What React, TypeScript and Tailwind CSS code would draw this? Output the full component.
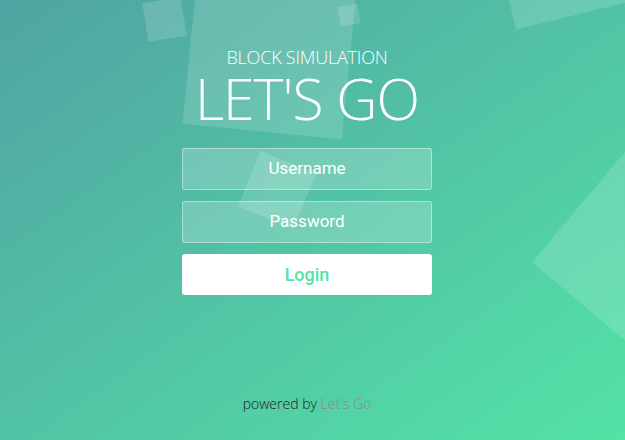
export default function App() {
    return (
        <div className="relative flex h-[440px] w-[625px] flex-col items-center overflow-hidden bg-gradient-to-br from-[#50a3a2] to-[#53e3a6] pr-[11px] font-['Open_Sans',sans-serif]">
            {/* floating squares */}
            <div className="absolute left-[145px] top-[0px] h-[39px] w-[39px] -rotate-[9deg] bg-white/15" />
            <div className="absolute left-[190px] top-[-28px] h-[160px] w-[160px] rotate-[5.7deg] bg-white/15" />
            <div className="absolute left-[339px] top-[5px] h-[20px] w-[20px] -rotate-[10deg] bg-white/15" />
            <div className="absolute left-[500px] top-[-103px] h-[120px] w-[120px] -rotate-[13.8deg] bg-white/15" />
            <div className="absolute left-[573px] top-[150px] h-[200px] w-[200px] rotate-[40deg] bg-white/15" />
            <div className="absolute left-[247px] top-[160px] h-[60px] w-[60px] rotate-[22deg] bg-white/15" />

            <div className="relative mt-[46px] flex flex-col items-center text-white">
                <p className="text-[18px] font-light leading-[22px] tracking-[-0.2px]">
                    BLOCK SIMULATION
                </p>
                <h1 className="text-[57px] font-light leading-[60px] tracking-[-1px]">
                    LET'S GO
                </h1>
            </div>

            <form className="relative mt-[20px] flex flex-col gap-[11px] font-['Roboto',sans-serif]">
                <div className="flex h-[42px] w-[250px] items-center justify-center rounded-[3px] border border-white/40 bg-white/20 text-[17px] text-white">
                    Username
                </div>
                <div className="flex h-[42px] w-[250px] items-center justify-center rounded-[3px] border border-white/40 bg-white/20 text-[17px] text-white">
                    Password
                </div>
                <button
                    type="button"
                    className="h-[41px] w-[250px] rounded-[3px] bg-white text-[18px] font-medium text-[#53e3a6]"
                >
                    Login
                </button>
            </form>

            <p className="relative mt-auto mb-[26px] text-[14px] font-light text-[#222]">
                powered by <span className="text-[#8a8a8a]">Let's Go</span>
            </p>
        </div>
    );
}
